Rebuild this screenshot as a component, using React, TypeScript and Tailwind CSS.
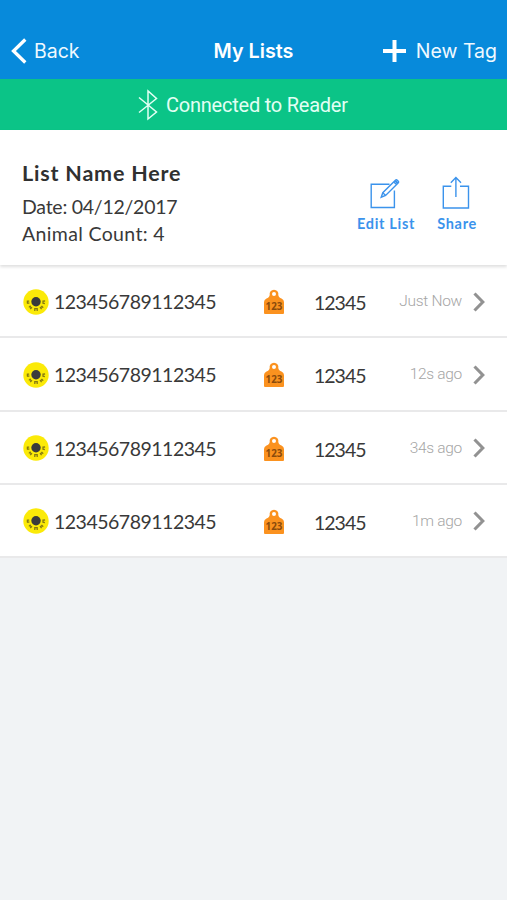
const entries = [
  { rfid: '123456789112345', tag: '12345', time: 'Just Now' },
  { rfid: '123456789112345', tag: '12345', time: '12s ago' },
  { rfid: '123456789112345', tag: '12345', time: '34s ago' },
  { rfid: '123456789112345', tag: '12345', time: '1m ago' },
]

function BluetoothIcon() {
  return (
    <svg width="20" height="32" viewBox="0 0 20 32" fill="none" stroke="#e2fff4" strokeWidth="1.5">
      <path d="M1 8.5 L18.5 23 L10 30 V2 L18.5 9.5 L1 23.5" />
    </svg>
  )
}

function EditIcon() {
  return (
    <svg width="30" height="32" viewBox="0 0 30 32" fill="none" stroke="#3b93ec" strokeWidth="1.4">
      <path d="M19.5 6.2 H1.2 V29.5 H24.4 V12.5" />
      <path d="M11.2 19.2 L12.8 14.7 L25.4 2.3 Q26.4 1.3 27.5 2.4 L28.1 3 Q29.1 4 28.1 5 L15.6 17.4 Z" />
      <path d="M12.8 14.7 L15.6 17.4 M23.8 3.9 L26.6 6.5" />
      <path d="M25.2 2.7 L27.8 5.2" strokeWidth="2" />
    </svg>
  )
}

function ShareIcon() {
  return (
    <svg width="28" height="34" viewBox="0 0 28 34" fill="none" stroke="#3b93ec" strokeWidth="1.4">
      <path d="M9.3 10.3 H1.3 V32 H26.5 V10.3 H18" />
      <path d="M13.9 21 V2 M8.8 6.7 L13.9 1.5 L19 6.7" />
    </svg>
  )
}

function RfidIcon() {
  return (
    <svg width="26" height="26" viewBox="0 0 26 26">
      <circle cx="13" cy="13" r="12.7" fill="#fbea08" />
      <circle cx="13" cy="12.7" r="4.7" fill="#393b3c" />
      <g fill="none" stroke="#857a12" strokeWidth="1.3">
        <path d="M3.8 12.2 H6.2 M4.2 14.4 L6.4 13.8 M4.4 12 V14.6" />
        <path d="M5.9 18.4 L7.6 16.8 M7.2 20 L9 18.2 M7 17.2 L8.2 19" />
        <path d="M11.8 21.9 V19.6 H14.2 V21.9" />
        <path d="M17 18.2 L18.6 20.2 M18.5 16.9 L20.2 18.7 M17.6 18.8 L19 17.4" />
        <path d="M22.1 12 L20 12.2 V14.2 L21.9 14.6" />
      </g>
    </svg>
  )
}

function EarTagIcon() {
  return (
    <svg width="22" height="26" viewBox="0 0 22 26">
      <path
        fillRule="evenodd"
        fill="#fb921f"
        d="M6.7 6 A4.4 4.4 0 1 1 15.3 6 C15.6 8.2 16.8 8.7 18.5 9.5 Q21 10.5 21 13 V24 Q21 25 20 25 H2 Q1 25 1 24 V13 Q1 10.5 3.5 9.5 C5.2 8.7 6.4 8.2 6.7 6 Z M11 2.9 A2 2 0 1 0 11 6.9 A2 2 0 1 0 11 2.9 Z"
      />
      <text x="11" y="21.3" textAnchor="middle" className="fill-[#8a4b0c] font-['Open_Sans',sans-serif] text-[9.8px] font-bold">
        123
      </text>
    </svg>
  )
}

function NavBar() {
  return (
    <header className="grid h-[79px] grid-cols-[1fr_auto_1fr] items-end bg-[#078adb] px-[10px] pb-[13px] font-['Inter',sans-serif] text-[19.5px] leading-[30px] text-[#eff9ff]">
      <button className="flex items-center gap-[7px]">
        <svg width="17" height="26" viewBox="0 0 17 26" fill="none" stroke="white" strokeWidth="3.3">
          <path d="M15.3 1.5 L3.5 13 L15.3 24.5" />
        </svg>
        Back
      </button>
      <h1 className="text-[19.8px] font-semibold text-white">My Lists</h1>
      <button className="flex items-center justify-end gap-[10px]">
        <svg width="23" height="22" viewBox="0 0 23 22" stroke="white" strokeWidth="4">
          <path d="M0 11 H23 M11.5 0 V22" />
        </svg>
        New Tag
      </button>
    </header>
  )
}

export default function App() {
  return (
    <div className="min-h-screen w-full bg-[#f1f3f5] font-['Lato',sans-serif] text-[#393939]">
      <NavBar />

      {/* Reader status */}
      <div className="flex h-[51px] items-center gap-[8px] bg-[#0bc487] pl-[138px] font-['Roboto',sans-serif] text-[20px] tracking-[-0.23px] text-[#e2fff4]">
        <BluetoothIcon />
        <span>Connected to Reader</span>
      </div>

      {/* List summary */}
      <section className="relative flex h-[135px] justify-between bg-white pt-[29px] pr-[30px] pl-[22px] shadow-[0_2px_3px_rgba(0,0,0,0.13)]">
        <div>
          <h2 className="text-[21.5px] leading-[28px] font-bold tracking-[0.8px] text-[#303030]">List Name Here</h2>
          <p className="mt-[6px] text-[19.5px] leading-[27px] tracking-[-0.25px]">Date: 04/12/2017</p>
          <p className="text-[19.5px] leading-[27px] tracking-[0.35px]">Animal Count: 4</p>
        </div>
        <div className="flex gap-[22px] pt-[17px] text-[14.5px] leading-[18px] font-bold tracking-[0.7px] text-[#3b93ec]">
          <button className="flex flex-col items-center gap-[5px]">
            <span className="flex h-[34px] items-end pr-[2px]"><EditIcon /></span>
            Edit List
          </button>
          <button className="flex flex-col items-center gap-[5px]">
            <span className="pr-[2px]"><ShareIcon /></span>
            Share
          </button>
        </div>
      </section>

      {/* Scanned animals */}
      <ul>
        {entries.map((entry, i) => (
          <li
            key={i}
            className="grid h-[73.25px] grid-cols-[31px_209px_51px_61px_1fr_23px] items-center border-b-2 border-[#e9e9ea] bg-white pt-[2px] pr-[22px] pl-[23px] text-[19.5px]"
          >
            <RfidIcon />
            <span className="tracking-[-0.5px]">{entry.rfid}</span>
            <span className="pt-px"><EarTagIcon /></span>
            <span className="pt-[2px] tracking-[-1px]">{entry.tag}</span>
            <span className="text-right font-['Roboto',sans-serif] text-[15.5px] font-light tracking-[-0.3px] text-[#a5a5a5]">
              {entry.time}
            </span>
            <svg className="justify-self-end" width="12" height="20" viewBox="0 0 12 20" fill="none" stroke="#929292" strokeWidth="3.1">
              <path d="M1.5 1.5 L9.8 10 L1.5 18.5" />
            </svg>
          </li>
        ))}
      </ul>
    </div>
  )
}
